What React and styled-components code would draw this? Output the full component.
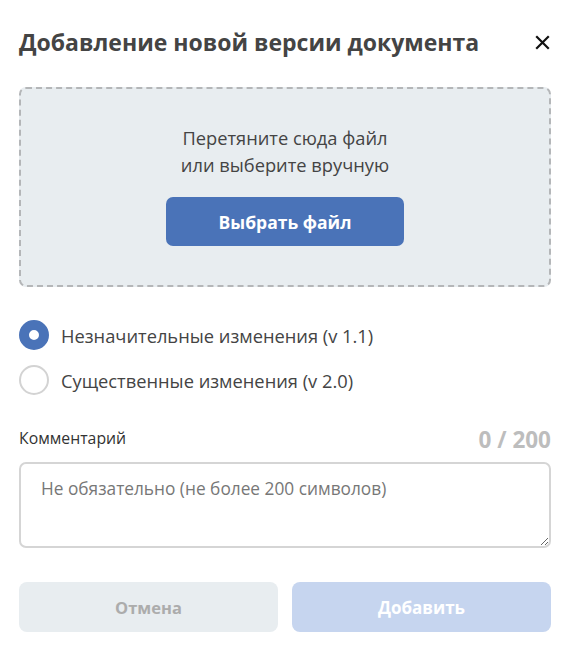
import React, { useState } from 'react';
import styled, { createGlobalStyle } from 'styled-components';

const GlobalStyle = createGlobalStyle`
  html, body {
    margin: 0;
    padding: 0;
    background: #fff;
  }
  body {
    font-family: 'Open Sans', 'Noto Sans', sans-serif;
    color: #444;
  }
  * {
    box-sizing: border-box;
  }
`;

const Dialog = styled.div`
  width: 570px;
  padding: 24px 19px 22px;
  background: #fff;
`;

const Header = styled.div`
  display: flex;
  align-items: center;
  justify-content: space-between;
  height: 36px;
`;

const Title = styled.h2`
  margin: 0;
  font-size: 23px;
  font-weight: 700;
  color: #444;
  letter-spacing: 0;
`;

const CloseButton = styled.button`
  display: flex;
  align-items: center;
  justify-content: center;
  width: 24px;
  height: 24px;
  margin-right: -3px;
  padding: 0;
  border: 0;
  background: none;
  cursor: pointer;
`;

const DropZone = styled.div`
  margin-top: 27px;
  height: 200px;
  padding-bottom: 4px;
  display: flex;
  flex-direction: column;
  align-items: center;
  justify-content: center;
  background: #e8edf0;
  border: 2px dashed #b4b6b8;
  border-radius: 7px;
`;

const DropText = styled.p`
  margin: 0;
  font-size: 18.3px;
  line-height: 27px;
  text-align: center;
  color: #444;
`;

const PrimaryButton = styled.button`
  margin-top: 19px;
  width: 238px;
  height: 49px;
  border: 0;
  border-radius: 7px;
  background: #4a73b8;
  color: #fff;
  font-family: inherit;
  font-size: 17.5px;
  font-weight: 700;
  cursor: pointer;
`;

const Options = styled.div`
  margin-top: 33px;
  display: flex;
  flex-direction: column;
  gap: 15px;
`;

const Option = styled.label`
  display: flex;
  align-items: center;
  gap: 12px;
  height: 30px;
  font-size: 18.3px;
  color: #444;
  cursor: pointer;
`;

const RadioMark = styled.span`
  width: 30px;
  height: 30px;
  border-radius: 50%;
  flex: none;
  border: ${p => (p.checked ? '10px solid #4a73b8' : '2px solid #d3d3d3')};
  background: #fff;
`;

const FieldHead = styled.div`
  margin-top: 30px;
  height: 26px;
  display: flex;
  align-items: center;
  justify-content: space-between;
`;

const FieldLabel = styled.span`
  font-size: 15.8px;
  color: #333;
`;

const Counter = styled.span`
  font-size: 22.5px;
  font-weight: 700;
  color: #bdbdbd;
  padding-top: 3px;
`;

const TextArea = styled.textarea`
  display: block;
  margin-top: 11px;
  width: 100%;
  height: 86px;
  padding: 13px 20px;
  border: 2px solid #d5d5d5;
  border-radius: 7px;
  font-family: inherit;
  font-size: 17.3px;
  color: #444;
  resize: vertical;
  outline: none;

  &::placeholder {
    color: #777;
  }
`;

const Footer = styled.div`
  margin-top: 34px;
  display: grid;
  grid-template-columns: 1fr 1fr;
  gap: 14px;
`;

const FooterButton = styled.button`
  height: 50px;
  border: 0;
  border-radius: 8px;
  font-family: inherit;
  font-size: ${p => (p.primary ? '17px' : '16.5px')};
  font-weight: 700;
  background: ${p => (p.primary ? '#c6d5ef' : '#e8edf0')};
  color: ${p => (p.primary ? '#fff' : '#acacac')};
`;

const CloseIcon = () => (
  <svg width="15" height="15" viewBox="0 0 15 15">
    <path d="M2 2 L13 13 M13 2 L2 13" stroke="#111" strokeWidth="2.2" strokeLinecap="square" />
  </svg>
);

export default function App() {
  const [version, setVersion] = useState('minor');
  const [comment, setComment] = useState('');

  return (
    <>
      <GlobalStyle />
      <Dialog>
        <Header>
          <Title>Добавление новой версии документа</Title>
          <CloseButton aria-label="Закрыть">
            <CloseIcon />
          </CloseButton>
        </Header>

        <DropZone>
          <DropText>
            Перетяните сюда файл
            <br />
            или выберите вручную
          </DropText>
          <PrimaryButton>Выбрать файл</PrimaryButton>
        </DropZone>

        <Options>
          <Option onClick={() => setVersion('minor')}>
            <RadioMark checked={version === 'minor'} />
            Незначительные изменения (v 1.1)
          </Option>
          <Option onClick={() => setVersion('major')}>
            <RadioMark checked={version === 'major'} />
            Существенные изменения (v 2.0)
          </Option>
        </Options>

        <FieldHead>
          <FieldLabel>Комментарий</FieldLabel>
          <Counter>{comment.length} / 200</Counter>
        </FieldHead>
        <TextArea
          placeholder="Не обязательно (не более 200 символов)"
          maxLength={200}
          value={comment}
          onChange={e => setComment(e.target.value)}
        />

        <Footer>
          <FooterButton disabled>Отмена</FooterButton>
          <FooterButton primary disabled>
            Добавить
          </FooterButton>
        </Footer>
      </Dialog>
    </>
  );
}
